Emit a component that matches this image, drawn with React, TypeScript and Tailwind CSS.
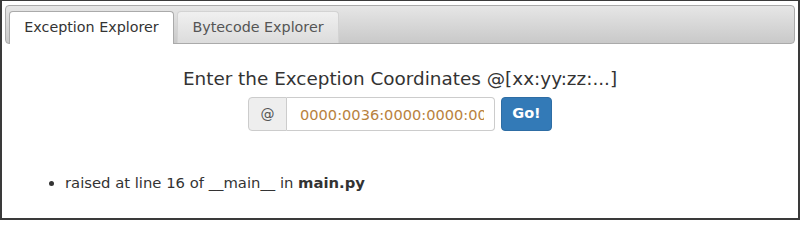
export default function App() {
  return (
    <div className="h-[220px] w-[800px] bg-white font-['DejaVu_Sans',sans-serif] text-[#333]">
      <div className="flex h-full flex-col border-2 border-t-[1px] border-[#3a3a3a] bg-white">
        {/* Tab bar */}
        <div className="mx-[3px] mt-[4px] flex h-[39px] items-end gap-[3px] rounded-[4px] border border-[#aaa] bg-gradient-to-b from-[#e6e6e6] to-[#c9c9c9] px-[3px]">
          <div className="-mb-px flex h-[33px] w-[165px] items-center justify-center rounded-t-[4px] border border-b-0 border-[#aaa] bg-white text-[14.3px] text-[#333]">
            Exception Explorer
          </div>
          <div className="mb-0 flex h-[32px] w-[162px] items-center justify-center rounded-t-[4px] border border-b-0 border-[#d3d3d3] bg-gradient-to-b from-[#f0f0f0] to-[#dcdcdc] text-[14.3px] text-[#555]">
            Bytecode Explorer
          </div>
        </div>

        {/* Body */}
        <div className="flex flex-col items-center pt-[22px]">
          <h2 className="text-[18.4px] leading-[25px] text-[#333]">
            Enter the Exception Coordinates @[xx:yy:zz:...]
          </h2>
          <div className="mt-[6px] flex items-center gap-[6px]">
            <div className="flex h-[34px]">
              <span className="flex w-[39px] items-center justify-center rounded-l-[4px] border border-[#ccc] bg-[#eee] text-[14px] text-[#555]">
                @
              </span>
              <input
                readOnly
                defaultValue="0000:0036:0000:0000:0000"
                className="h-[34px] w-[208px] rounded-r-[4px] border border-l-0 border-[#ccc] bg-white pl-[13px] pr-[10px] text-[14.6px] text-[#b8823e] outline-none"
              />
            </div>
            <button className="flex h-[34px] w-[51px] items-center justify-center rounded-[4px] border border-[#2e6da4] bg-[#337ab7] text-[14.5px] font-bold text-white">
              Go!
            </button>
          </div>
        </div>

        <ul className="ml-[46px] mt-[41px] list-disc pl-[17px] text-[14.8px] text-[#333]">
          <li>
            raised at line 16 of __main__ in <b>main.py</b>
          </li>
        </ul>
      </div>
    </div>
  );
}
